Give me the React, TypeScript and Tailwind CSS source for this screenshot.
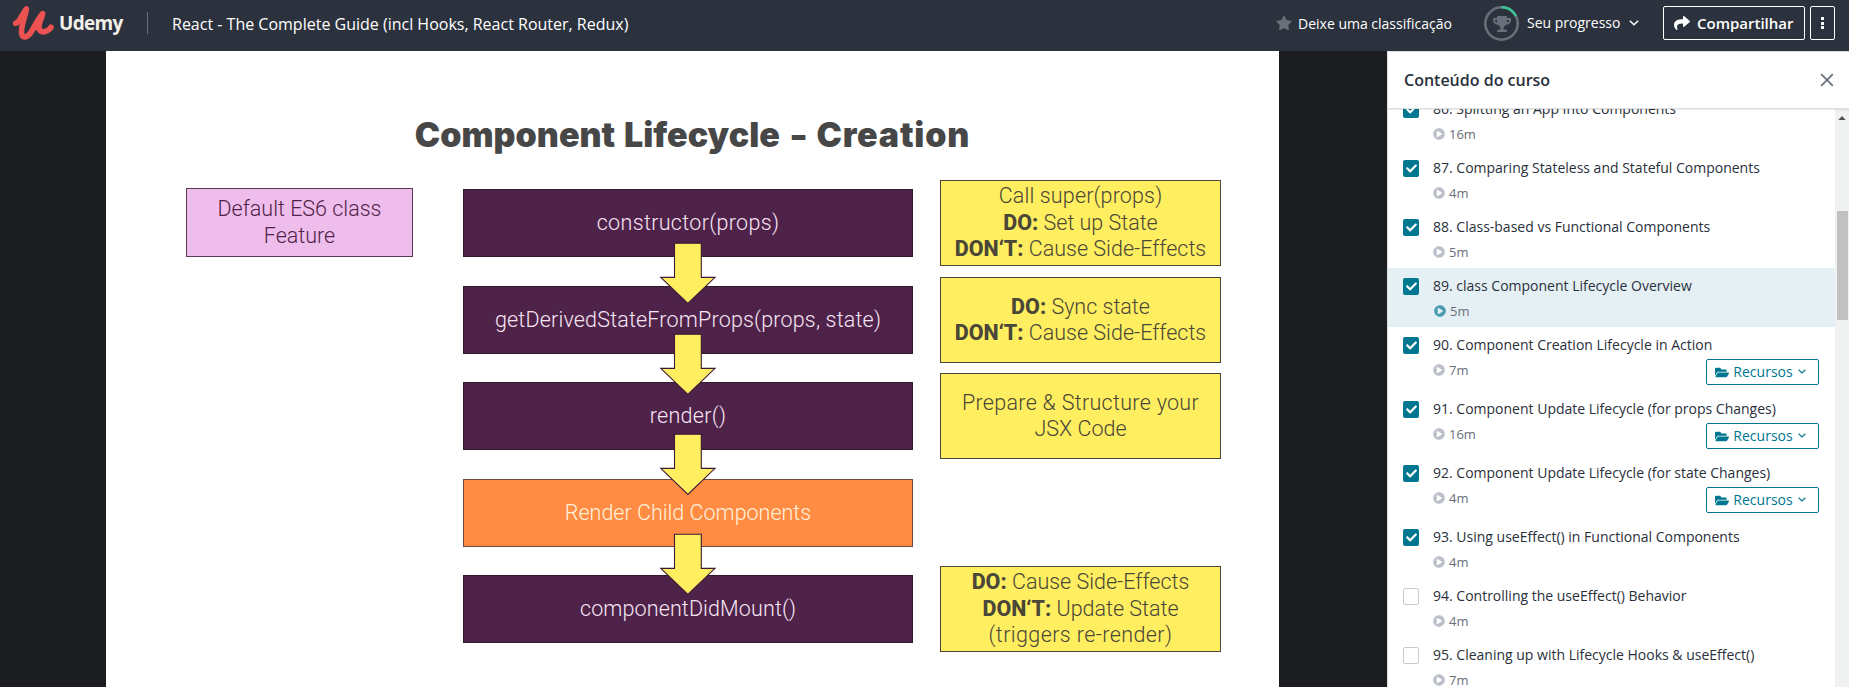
import { FaCheck, FaFolderOpen, FaPlayCircle, FaShare, FaStar, FaTrophy } from "react-icons/fa";

type Lecture = {
  title: string;
  time: string;
  done: boolean;
  active?: boolean;
  resources?: boolean;
};

const lectures: Lecture[] = [
  { title: "86. Splitting an App Into Components", time: "16m", done: true },
  { title: "87. Comparing Stateless and Stateful Components", time: "4m", done: true },
  { title: "88. Class-based vs Functional Components", time: "5m", done: true },
  { title: "89. class Component Lifecycle Overview", time: "5m", done: true, active: true },
  { title: "90. Component Creation Lifecycle in Action", time: "7m", done: true, resources: true },
  { title: "91. Component Update Lifecycle (for props Changes)", time: "16m", done: true, resources: true },
  { title: "92. Component Update Lifecycle (for state Changes)", time: "4m", done: true, resources: true },
  { title: "93. Using useEffect() in Functional Components", time: "4m", done: true },
  { title: "94. Controlling the useEffect() Behavior", time: "4m", done: false },
  { title: "95. Cleaning up with Lifecycle Hooks & useEffect()", time: "7m", done: false },
];

function Chevron({ className }: { className: string }) {
  return (
    <svg className={className} viewBox="0 0 10 6" fill="none" stroke="currentColor" strokeWidth="1.5">
      <path d="M0.8 0.8 L5 4.8 L9.2 0.8" />
    </svg>
  );
}

function Header() {
  return (
    <header className="flex h-[51px] shrink-0 items-start bg-[#2c323d] text-[14px] leading-[20px] text-white">
      <svg className="mt-[5px] ml-[12px] h-[36px] w-[43px] shrink-0" viewBox="36 15 129 108" fill="none">
        <path
          d="M47 70 C60 66 66 42 79 27 C76 52 61 78 65 101 C68 117 84 111 94 95 C106 76 115 56 128 41 C124 60 111 78 119 90 C127 101 145 94 153 82"
          stroke="#ec5252"
          strokeWidth="17"
          strokeLinecap="round"
          strokeLinejoin="round"
        />
      </svg>
      <span className="mt-[13px] ml-[4px] w-[64px] text-[19px] leading-[20px] font-bold tracking-[-0.7px] text-[#f2f0ea]">Udemy</span>
      <div className="mt-[12px] ml-[24px] h-[22px] w-px bg-[#686f7a]" />
      <h1 className="mt-[14px] ml-[24px] text-[16px] whitespace-nowrap">React - The Complete Guide (incl Hooks, React Router, Redux)</h1>
      <div className="ml-auto flex items-start">
        <FaStar className="mt-[15px] h-[16px] w-[16px] text-[#686f7a]" />
        <span className="mt-[14px] ml-[6px] w-[157px] whitespace-nowrap">Deixe uma classificação</span>
        <div className="mt-[6px] ml-[29px] grid h-[35px] w-[35px] place-items-center">
          <svg className="col-start-1 row-start-1 h-[35px] w-[35px]" viewBox="0 0 35 35" fill="none" strokeWidth="2.6">
            <circle cx="17.5" cy="17.5" r="16.2" stroke="#686f7a" />
            <path d="M17.5 1.3 A16.2 16.2 0 0 1 31.9 10" stroke="#3bc493" />
          </svg>
          <FaTrophy className="col-start-1 row-start-1 h-[16px] w-[18px] text-[#686f7a]" />
        </div>
        <span className="mt-[13px] ml-[8px] w-[94px] whitespace-nowrap">Seu progresso</span>
        <Chevron className="mt-[20px] ml-[8px] h-[6px] w-[10px]" />
        <button className="mt-[6px] ml-[24px] flex h-[34px] w-[142px] items-center rounded-[2px] border border-white pl-[10px] text-[15px] font-semibold">
          <FaShare className="h-[16px] w-[16px]" />
          <span className="ml-[7px]">Compartilhar</span>
        </button>
        <button className="mt-[6px] mr-[14px] ml-[5px] flex h-[34px] w-[25px] flex-col items-center justify-center gap-[1.5px] rounded-[2px] border border-white">
          <span className="h-[3px] w-[3px] bg-white" />
          <span className="h-[3px] w-[3px] bg-white" />
          <span className="h-[3px] w-[3px] bg-white" />
        </button>
      </div>
    </header>
  );
}

function Arrow({ className }: { className: string }) {
  return (
    <svg className={`absolute left-[553px] h-[63px] w-[58px] ${className}`} viewBox="0 0 58 63" fill="#ffee60" stroke="#3a1a36" strokeWidth="1.1">
      <path d="M15.5 1.2 H42.3 V35.4 H56 L28.9 61.5 L1.8 35.4 H15.5 Z" />
    </svg>
  );
}

function Slide() {
  const step =
    "absolute left-[357px] flex h-[68px] w-[450px] items-center justify-center border border-[#35172f] bg-[#4f2249] text-[#f6e6f4]";
  const note =
    "absolute left-[834px] flex h-[86px] w-[281px] flex-col items-center justify-center border border-[#4b473a] bg-[#ffee60] text-[#4a4638]";
  return (
    <section className="relative h-full w-[1173px] shrink-0 overflow-hidden bg-white font-['Roboto',sans-serif] text-[21.5px] leading-[26.5px] font-light whitespace-nowrap">
      <h2 className="absolute top-[62px] left-0 w-[1173px] text-center font-['Inter',sans-serif] text-[34px] leading-[44px] font-black text-[#474747] [word-spacing:2px]">
        Component Lifecycle <span className="mx-px inline-block scale-x-80">–</span> <span className="tracking-[0.8px]">Creation</span>
      </h2>
      <div className="absolute top-[137px] left-[80px] flex h-[69px] w-[227px] flex-col items-center justify-center border border-[#5a3a57] bg-[#efbdeb] text-[#4f2249]">
        <span>Default ES6 class</span>
        <span>Feature</span>
      </div>

      <div className={`${step} top-[138px] tracking-[0.33px]`}><span>constructor(props)</span></div>
      <div className={`${step} top-[235px] tracking-[0.18px]`}><span>getDerivedStateFromProps(props, state)</span></div>
      <div className={`${step} top-[331px] tracking-[0.3px]`}><span>render()</span></div>
      <div className="absolute top-[428px] left-[357px] flex h-[68px] w-[450px] items-center justify-center border border-[#704a3c] bg-[#ff8c42] text-[#fff0dc]">
        <span>Render Child Components</span>
      </div>
      <div className={`${step} top-[524px] tracking-[0.12px]`}><span>componentDidMount()</span></div>

      <Arrow className="top-[191px]" />
      <Arrow className="top-[282px]" />
      <Arrow className="top-[382px]" />
      <Arrow className="top-[482px]" />

      <div className={`${note} top-[129px]`}>
        <span className="tracking-[0.15px]">Call super(props)</span>
        <span><b className="font-extrabold">DO:</b> Set up State</span>
        <span><b className="font-extrabold">DON‘T:</b> Cause Side-Effects</span>
      </div>
      <div className={`${note} top-[226px]`}>
        <span><b className="font-extrabold">DO:</b> Sync state</span>
        <span><b className="font-extrabold">DON‘T:</b> Cause Side-Effects</span>
      </div>
      <div className={`${note} top-[322px]`}>
        <span className="tracking-[0.3px]">Prepare &amp; Structure your</span>
        <span>JSX Code</span>
      </div>
      <div className={`${note} top-[515px]`}>
        <span><b className="font-extrabold">DO:</b> Cause Side-Effects</span>
        <span><b className="font-extrabold">DON‘T:</b> Update State</span>
        <span className="tracking-[0.4px]">(triggers re-render)</span>
      </div>
    </section>
  );
}

function LectureRow({ lecture }: { lecture: Lecture }) {
  return (
    <li className={`flex shrink-0 items-start pl-[15px] ${lecture.resources ? "h-[64px]" : "h-[59px]"} ${lecture.active ? "bg-[#e5f0f4]" : "bg-white"}`}>
      {lecture.done ? (
        <span className="mt-[10px] grid h-[17px] w-[16px] shrink-0 place-items-center rounded-[2px] bg-[#007791] text-white">
          <FaCheck className="h-[11px] w-[11px]" />
        </span>
      ) : (
        <span className="mt-[10px] h-[17px] w-[16px] shrink-0 rounded-[2px] border border-[#cacbcc] bg-white" />
      )}
      <div className="ml-[14px] flex-1">
        <p className="mt-[8px] text-[14px] leading-[20px] whitespace-nowrap text-[#29303b]">{lecture.title}</p>
        <div className="flex items-start">
          <div className={`mt-[9px] flex h-[12px] items-center ${lecture.active ? "pl-px" : ""}`}>
            <FaPlayCircle className={`h-[12px] w-[12px] ${lecture.active ? "text-[#4c9cb0]" : "text-[#bcc0ca]"}`} />
            <span className="ml-[4px] text-[13px] leading-[12px] text-[#686f7a]">{lecture.time}</span>
          </div>
          {lecture.resources && (
            <button className="mt-[4px] mr-[16px] ml-auto flex h-[26px] w-[113px] items-center rounded-[2px] border border-[#007791] pl-[8px] text-[14px] leading-[20px] text-[#007791]">
              <FaFolderOpen className="h-[13px] w-[14px]" />
              <span className="ml-[4px] w-[60px]">Recursos</span>
              <Chevron className="-mt-[2px] ml-[5px] h-[5px] w-[8px]" />
            </button>
          )}
        </div>
      </div>
    </li>
  );
}

function Sidebar() {
  return (
    <aside className="flex h-full flex-1 flex-col overflow-hidden border-l border-[#dedfe0] bg-white">
      <div className="z-10 flex h-[58px] shrink-0 items-center justify-between border-t border-b border-[#dedfe0] bg-white pr-[15px] pl-[16px] shadow-[0_1px_1px_rgba(0,0,0,0.08)]">
        <h2 className="text-[16px] leading-[20px] font-semibold text-[#29303b]">Conteúdo do curso</h2>
        <svg className="h-[14px] w-[14px]" viewBox="0 0 14 14" fill="none" stroke="#686f7a" strokeWidth="1.7">
          <path d="M1.2 1.2 L12.8 12.8 M12.8 1.2 L1.2 12.8" />
        </svg>
      </div>
      <div className="flex min-h-0 flex-1">
        <ul className="-mt-[18px] flex flex-1 flex-col">
          {lectures.map((l) => (
            <LectureRow key={l.title} lecture={l} />
          ))}
        </ul>
        <div className="flex w-[14px] shrink-0 flex-col items-center bg-[#f0f1f1]">
          <svg className="mt-[7px] h-[4px] w-[8px]" viewBox="0 0 8 4" fill="#505050">
            <path d="M0.4 4 L4 0 L7.6 4 Z" />
          </svg>
          <div className="mt-[91px] h-[109px] w-[11px] bg-[#c1c1c1]" />
        </div>
      </div>
    </aside>
  );
}

export default function App() {
  return (
    <div className="flex h-[687px] w-[1849px] flex-col overflow-hidden bg-[#1c1d21] font-['Open_Sans',sans-serif]">
      <Header />
      <main className="flex min-h-0 flex-1">
        <div className="w-[106px] shrink-0" />
        <Slide />
        <div className="w-[108px] shrink-0" />
        <Sidebar />
      </main>
    </div>
  );
}
